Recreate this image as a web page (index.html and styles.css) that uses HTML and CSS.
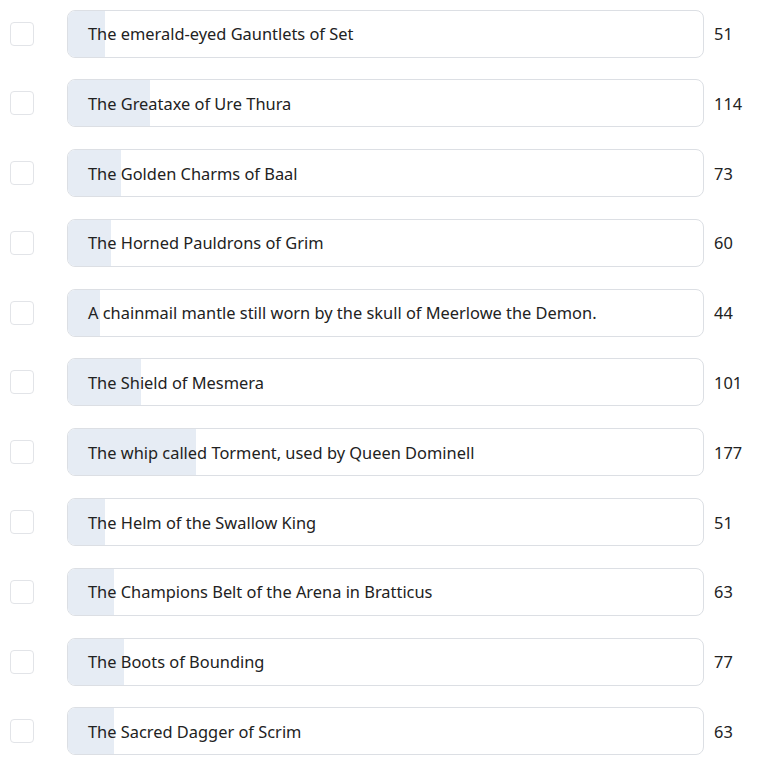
FILE: index.html
```html
<!DOCTYPE html>
<html lang="en">
<head>
    <meta charset="UTF-8">
    <meta name="viewport" content="width=device-width, initial-scale=1.0">
    <title>Items</title>
    <link rel="stylesheet" href="styles.css">
</head>
<body>
    <div class="list">
        <div class="row">
            <span class="check"></span>
            <div class="bar"><div class="fill" style="width: 5.81%"></div><span class="label">The emerald-eyed Gauntlets of Set</span></div>
            <span class="count">51</span>
        </div>
        <div class="row">
            <span class="check"></span>
            <div class="bar"><div class="fill" style="width: 12.98%"></div><span class="label">The Greataxe of Ure Thura</span></div>
            <span class="count">114</span>
        </div>
        <div class="row">
            <span class="check"></span>
            <div class="bar"><div class="fill" style="width: 8.31%"></div><span class="label">The Golden Charms of Baal</span></div>
            <span class="count">73</span>
        </div>
        <div class="row">
            <span class="check"></span>
            <div class="bar"><div class="fill" style="width: 6.83%"></div><span class="label">The Horned Pauldrons of Grim</span></div>
            <span class="count">60</span>
        </div>
        <div class="row">
            <span class="check"></span>
            <div class="bar"><div class="fill" style="width: 5.01%"></div><span class="label">A chainmail mantle still worn by the skull of Meerlowe the Demon.</span></div>
            <span class="count">44</span>
        </div>
        <div class="row">
            <span class="check"></span>
            <div class="bar"><div class="fill" style="width: 11.5%"></div><span class="label">The Shield of Mesmera</span></div>
            <span class="count">101</span>
        </div>
        <div class="row">
            <span class="check"></span>
            <div class="bar"><div class="fill" style="width: 20.16%"></div><span class="label">The whip called Torment, used by Queen Dominell</span></div>
            <span class="count">177</span>
        </div>
        <div class="row">
            <span class="check"></span>
            <div class="bar"><div class="fill" style="width: 5.81%"></div><span class="label">The Helm of the Swallow King</span></div>
            <span class="count">51</span>
        </div>
        <div class="row">
            <span class="check"></span>
            <div class="bar"><div class="fill" style="width: 7.18%"></div><span class="label">The Champions Belt of the Arena in Bratticus</span></div>
            <span class="count">63</span>
        </div>
        <div class="row">
            <span class="check"></span>
            <div class="bar"><div class="fill" style="width: 8.77%"></div><span class="label">The Boots of Bounding</span></div>
            <span class="count">77</span>
        </div>
        <div class="row">
            <span class="check"></span>
            <div class="bar"><div class="fill" style="width: 7.18%"></div><span class="label">The Sacred Dagger of Scrim</span></div>
            <span class="count">63</span>
        </div>
    </div>
</body>
</html>
```

FILE: styles.css
```css
body {
    margin: 0;
    background-color: white;
    font-family: "Noto Sans", "Open Sans", sans-serif;
    color: #222;
}
.list {
    display: flex;
    flex-direction: column;
    gap: 21.8px;
    padding: 9.5px 0 0 10px;
}
.row {
    display: flex;
    align-items: center;
    height: 48px;
}
.check {
    width: 22px;
    height: 22px;
    border: 1px solid #e2e4e8;
    border-radius: 4px;
    margin-right: 33px;
}
.bar {
    position: relative;
    width: 635px;
    height: 46px;
    border: 1px solid #dcdfe4;
    border-radius: 8px;
    overflow: hidden;
    display: flex;
    align-items: center;
}
.fill {
    position: absolute;
    left: 0;
    top: 0;
    bottom: 0;
    background-color: #e6ecf4;
}
.label {
    position: relative;
    padding-left: 20px;
    font-size: 16.4px;
}
.count {
    margin-left: 10px;
    font-size: 16.4px;
}
```
